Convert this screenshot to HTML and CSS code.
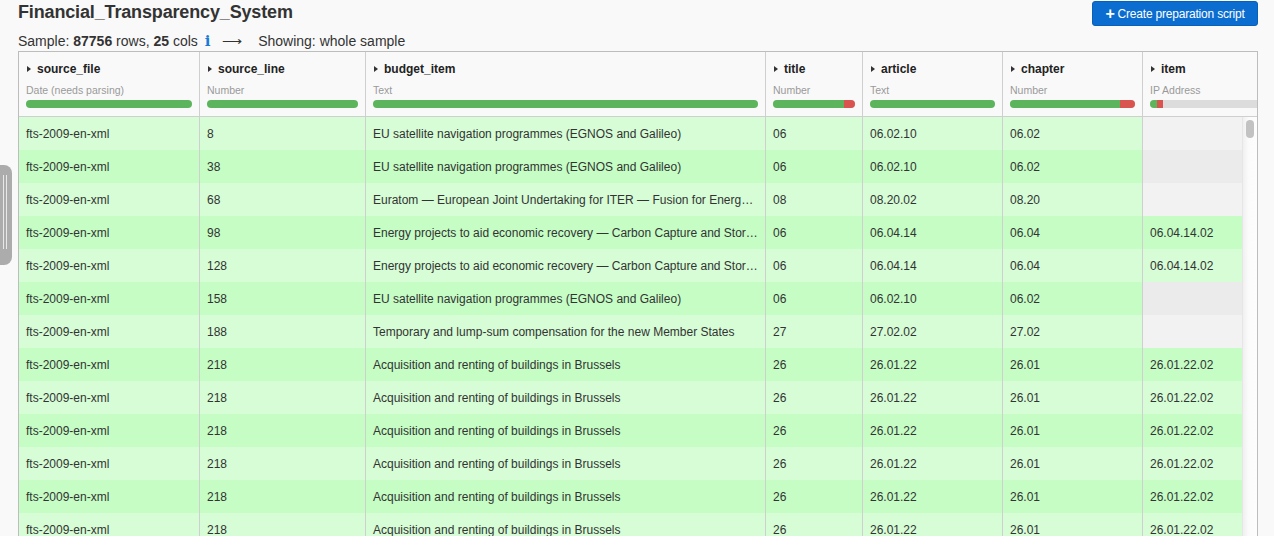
FILE: index.html
```html
<!DOCTYPE html>
<html>
<head>
<meta charset="utf-8">
<link rel="stylesheet" href="styles.css">
</head>
<body>
<div class="handle"><span></span><span></span></div>
<div class="topbar">
  <h1 class="title">Financial_Transparency_System</h1>
  <button class="btn"><span class="plus">+</span>Create preparation script</button>
</div>
<div class="sample">Sample: <b>87756</b> rows, <b>25</b> cols <span class="info">i</span> <span class="arrow">⟶</span> Showing: whole sample</div>
<div class="grid">
  <div class="head">
    <div class="hcell c1"><div class="hname"><span class="tri"></span>source_file</div><div class="htype">Date (needs parsing)</div><div class="bar"><i class="ok" style="width:100%"></i></div></div>
    <div class="hcell c2"><div class="hname"><span class="tri"></span>source_line</div><div class="htype">Number</div><div class="bar"><i class="ok" style="width:100%"></i></div></div>
    <div class="hcell c3"><div class="hname"><span class="tri"></span>budget_item</div><div class="htype">Text</div><div class="bar"><i class="ok" style="width:100%"></i></div></div>
    <div class="hcell c4"><div class="hname"><span class="tri"></span>title</div><div class="htype">Number</div><div class="bar"><i class="ok" style="width:87%"></i><i class="bad" style="width:13%"></i></div></div>
    <div class="hcell c5"><div class="hname"><span class="tri"></span>article</div><div class="htype">Text</div><div class="bar"><i class="ok" style="width:100%"></i></div></div>
    <div class="hcell c6"><div class="hname"><span class="tri"></span>chapter</div><div class="htype">Number</div><div class="bar"><i class="ok" style="width:88%"></i><i class="bad" style="width:12%"></i></div></div>
    <div class="hcell c7 last"><div class="hname"><span class="tri"></span>item</div><div class="htype">IP Address</div><div class="bar open"><i class="ok" style="width:7px"></i><i class="bad" style="width:6px"></i></div></div>
  </div>
  <div class="body">
    <div class="row"><div class="cell c1">fts-2009-en-xml</div><div class="cell c2">8</div><div class="cell c3">EU satellite navigation programmes (EGNOS and Galileo)</div><div class="cell c4">06</div><div class="cell c5">06.02.10</div><div class="cell c6">06.02</div><div class="cell c7 empty"></div></div>
    <div class="row"><div class="cell c1">fts-2009-en-xml</div><div class="cell c2">38</div><div class="cell c3">EU satellite navigation programmes (EGNOS and Galileo)</div><div class="cell c4">06</div><div class="cell c5">06.02.10</div><div class="cell c6">06.02</div><div class="cell c7 empty"></div></div>
    <div class="row"><div class="cell c1">fts-2009-en-xml</div><div class="cell c2">68</div><div class="cell c3">Euratom — European Joint Undertaking for ITER — Fusion for Energy (F4E)</div><div class="cell c4">08</div><div class="cell c5">08.20.02</div><div class="cell c6">08.20</div><div class="cell c7 empty"></div></div>
    <div class="row"><div class="cell c1">fts-2009-en-xml</div><div class="cell c2">98</div><div class="cell c3">Energy projects to aid economic recovery — Carbon Capture and Storage (CCS)</div><div class="cell c4">06</div><div class="cell c5">06.04.14</div><div class="cell c6">06.04</div><div class="cell c7">06.04.14.02</div></div>
    <div class="row"><div class="cell c1">fts-2009-en-xml</div><div class="cell c2">128</div><div class="cell c3">Energy projects to aid economic recovery — Carbon Capture and Storage (CCS)</div><div class="cell c4">06</div><div class="cell c5">06.04.14</div><div class="cell c6">06.04</div><div class="cell c7">06.04.14.02</div></div>
    <div class="row"><div class="cell c1">fts-2009-en-xml</div><div class="cell c2">158</div><div class="cell c3">EU satellite navigation programmes (EGNOS and Galileo)</div><div class="cell c4">06</div><div class="cell c5">06.02.10</div><div class="cell c6">06.02</div><div class="cell c7 empty"></div></div>
    <div class="row"><div class="cell c1">fts-2009-en-xml</div><div class="cell c2">188</div><div class="cell c3">Temporary and lump-sum compensation for the new Member States</div><div class="cell c4">27</div><div class="cell c5">27.02.02</div><div class="cell c6">27.02</div><div class="cell c7 empty"></div></div>
    <div class="row"><div class="cell c1">fts-2009-en-xml</div><div class="cell c2">218</div><div class="cell c3">Acquisition and renting of buildings in Brussels</div><div class="cell c4">26</div><div class="cell c5">26.01.22</div><div class="cell c6">26.01</div><div class="cell c7">26.01.22.02</div></div>
    <div class="row"><div class="cell c1">fts-2009-en-xml</div><div class="cell c2">218</div><div class="cell c3">Acquisition and renting of buildings in Brussels</div><div class="cell c4">26</div><div class="cell c5">26.01.22</div><div class="cell c6">26.01</div><div class="cell c7">26.01.22.02</div></div>
    <div class="row"><div class="cell c1">fts-2009-en-xml</div><div class="cell c2">218</div><div class="cell c3">Acquisition and renting of buildings in Brussels</div><div class="cell c4">26</div><div class="cell c5">26.01.22</div><div class="cell c6">26.01</div><div class="cell c7">26.01.22.02</div></div>
    <div class="row"><div class="cell c1">fts-2009-en-xml</div><div class="cell c2">218</div><div class="cell c3">Acquisition and renting of buildings in Brussels</div><div class="cell c4">26</div><div class="cell c5">26.01.22</div><div class="cell c6">26.01</div><div class="cell c7">26.01.22.02</div></div>
    <div class="row"><div class="cell c1">fts-2009-en-xml</div><div class="cell c2">218</div><div class="cell c3">Acquisition and renting of buildings in Brussels</div><div class="cell c4">26</div><div class="cell c5">26.01.22</div><div class="cell c6">26.01</div><div class="cell c7">26.01.22.02</div></div>
    <div class="row"><div class="cell c1">fts-2009-en-xml</div><div class="cell c2">218</div><div class="cell c3">Acquisition and renting of buildings in Brussels</div><div class="cell c4">26</div><div class="cell c5">26.01.22</div><div class="cell c6">26.01</div><div class="cell c7">26.01.22.02</div></div>
    <div class="scroll"><div class="thumb"></div></div>
  </div>
</div>
</body>
</html>
```

FILE: styles.css
```css
html, body {
  margin: 0;
  padding: 0;
  height: 536px;
  overflow: hidden;
}
body {
  background: #f9f9f9;
  font-family: "Liberation Sans", Arial, sans-serif;
  color: #333;
  padding: 0 16px 0 18px;
  position: relative;
}
.handle {
  position: absolute;
  left: 0;
  top: 165px;
  width: 12px;
  height: 100px;
  background: #acacac;
  border-radius: 0 8px 8px 0;
  display: flex;
  gap: 2px;
  padding: 10px 0 0 3px;
  box-sizing: border-box;
}
.handle span {
  display: block;
  width: 1px;
  height: 74px;
  background: #e8e8e8;
}
.topbar {
  display: flex;
  justify-content: space-between;
  align-items: flex-start;
  height: 26px;
}
.title {
  margin: 0;
  font-size: 18px;
  line-height: 24px;
  font-weight: bold;
  color: #333;
  letter-spacing: -0.15px;
}
.btn {
  margin-top: 1px;
  width: 166px;
  height: 25px;
  border: 1px solid #0860b8;
  border-radius: 3px;
  background: #0a6dcf;
  color: #fff;
  font-family: "Liberation Sans", Arial, sans-serif;
  font-size: 12px;
  padding: 0;
  display: flex;
  align-items: center;
  justify-content: center;
  letter-spacing: -0.2px;
}
.plus {
  font-weight: bold;
  font-size: 16px;
  margin-right: 3px;
  line-height: 12px;
}
.sample {
  margin-top: 6px;
  font-size: 14px;
  line-height: 18px;
  height: 19px;
  color: #333;
}
.info {
  color: #1a7bd4;
  font-weight: bold;
  font-family: "DejaVu Serif", serif;
  font-size: 15px;
  margin: 0 8px 0 3px;
}
.arrow {
  margin-right: 12px;
  font-size: 14px;
}
.grid {
  width: 1238px;
  border: 1px solid #bdbdbd;
  background: #f9f9f9;
  overflow: hidden;
}
.head {
  display: flex;
  height: 64px;
  border-bottom: 1px solid #cfcfcf;
}
.c1 { width: 181px; }
.c2 { width: 166px; }
.c3 { width: 400px; }
.c4 { width: 97px; }
.c5 { width: 140px; }
.c6 { width: 140px; }
.c7 { width: 200px; }
.hcell, .cell {
  flex: none;
  box-sizing: border-box;
  border-right: 1px solid #cfcfcf;
}
.hcell {
  padding: 9px 7px 0 7px;
}
.hcell.last { padding-right: 0; }
.hname {
  font-size: 12px;
  font-weight: bold;
  color: #222;
  line-height: 16px;
  height: 16px;
  display: flex;
  align-items: center;
}
.tri {
  width: 0;
  height: 0;
  border-left: 4px solid #333;
  border-top: 3.5px solid transparent;
  border-bottom: 3.5px solid transparent;
  margin: 0 6px 0 1px;
}
.htype {
  font-size: 10.5px;
  color: #999;
  line-height: 12px;
  margin-top: 7px;
}
.bar {
  margin-top: 4px;
  height: 8px;
  border-radius: 4px;
  overflow: hidden;
  display: flex;
  background: #dcdcdc;
}
.bar.open { border-radius: 4px 0 0 4px; }
.bar i {
  display: block;
  height: 100%;
}
.bar .ok { background: #5cb55c; }
.bar .bad { background: #d9534f; }
.body {
  position: relative;
}
.row {
  display: flex;
  height: 33px;
  background: #d6fdd6;
}
.row:nth-child(even) {
  background: #c5fdc5;
}
.cell {
  font-size: 12px;
  line-height: 33px;
  height: 33px;
  padding: 1px 7px 0;
  color: #333;
  white-space: nowrap;
  overflow: hidden;
  text-overflow: ellipsis;
}
.cell.c7 { border-right: 0; }
.cell.empty { background: #f2f2f2; }
.row:nth-child(even) .cell.empty { background: #ebebeb; }
.scroll {
  position: absolute;
  top: 0;
  bottom: 0;
  right: 0;
  width: 14px;
  background: linear-gradient(to right, #f0f0f0, #fbfbfb 40%, #fdfdfd);
  border-left: 1px solid #e6e6e6;
}
.thumb {
  margin: 3px 0 0 3px;
  width: 8px;
  height: 18px;
  border-radius: 4px;
  background: #c2c2c2;
}
```
